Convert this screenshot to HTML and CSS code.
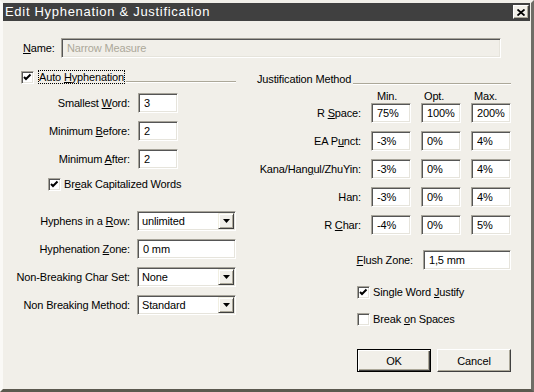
FILE: index.html
```html
<!DOCTYPE html>
<html lang="en">
<head>
  <meta charset="UTF-8">
  <title>Edit Hyphenation &amp; Justification</title>
  <link rel="stylesheet" href="styles.css">
</head>
<body>
  <div class="window">
    <div class="titlebar">
      <span class="title">Edit Hyphenation &amp; Justification</span>
      <span class="close">
        <svg width="8" height="7" viewBox="0 0 8 7"><path d="M0.5 0.5 L7.5 6.5 M7.5 0.5 L0.5 6.5" stroke="#000" stroke-width="1.8"/></svg>
      </span>
    </div>

    <div class="content">
      <div class="name-row">
        <label class="name-label"><u>N</u>ame:</label>
        <input class="field name-field" value="Narrow Measure" disabled>
      </div>

      <div class="columns">
        <!-- hyphenation -->
        <div class="left">
          <div class="group-head">
            <span class="check on"><svg width="11" height="11" viewBox="0 0 11 11"><polyline points="2,5 4,7 8.5,2.5" fill="none" stroke="#000" stroke-width="2"/></svg></span>
            <span class="focus">Auto <u>H</u>yphenation</span>
            <span class="rule"></span>
          </div>

          <div class="row first"><label><span>Smallest <u>W</u>ord:</span></label><input class="field small" value="3"></div>
          <div class="row"><label><span>Minimum <u>B</u>efore:</span></label><input class="field small" value="2"></div>
          <div class="row"><label><span>Minimum <u>A</u>fter:</span></label><input class="field small" value="2"></div>

          <div class="check-row indent">
            <span class="check on"><svg width="11" height="11" viewBox="0 0 11 11"><polyline points="2,5 4,7 8.5,2.5" fill="none" stroke="#000" stroke-width="2"/></svg></span>
            <span class="check-text">Br<u>e</u>ak Capitalized Words</span>
          </div>

          <div class="row wide spaced"><label><span>Hyphens in a <u>R</u>ow:</span></label>
            <div class="select"><span class="sel-text">unlimited</span><span class="arrow"><svg width="7" height="4" viewBox="0 0 7 4"><path d="M0 0 H7 L3.5 4 Z" fill="#000"/></svg></span></div>
          </div>
          <div class="row wide"><label><span>Hyphenation <u>Z</u>one:</span></label><input class="field long" value="0 mm"></div>
          <div class="row wide"><label><span>Non-Breaking Char Set:</span></label>
            <div class="select"><span class="sel-text">None</span><span class="arrow"><svg width="7" height="4" viewBox="0 0 7 4"><path d="M0 0 H7 L3.5 4 Z" fill="#000"/></svg></span></div>
          </div>
          <div class="row wide"><label><span>Non Breaking Method:</span></label>
            <div class="select"><span class="sel-text">Standard</span><span class="arrow"><svg width="7" height="4" viewBox="0 0 7 4"><path d="M0 0 H7 L3.5 4 Z" fill="#000"/></svg></span></div>
          </div>
        </div>

        <!-- justification -->
        <div class="right">
          <div class="group-head jtitle">
            <span>Justification Method</span>
            <span class="rule"></span>
          </div>

          <div class="jhead">
            <span></span><span class="h-min">Min.</span><span>Opt.</span><span>Max.</span>
          </div>

          <div class="jgrid">
            <label><span>R <u>S</u>pace:</span></label><input class="field" value="75%"><input class="field" value="100%"><input class="field" value="200%">
            <label><span>EA P<u>u</u>nct:</span></label><input class="field" value="-3%"><input class="field" value="0%"><input class="field" value="4%">
            <label><span>Kana/Han<u>g</u>ul/ZhuYin:</span></label><input class="field" value="-3%"><input class="field" value="0%"><input class="field" value="4%">
            <label><span>Han:</span></label><input class="field" value="-3%"><input class="field" value="0%"><input class="field" value="4%">
            <label><span>R <u>C</u>har:</span></label><input class="field" value="-4%"><input class="field" value="0%"><input class="field" value="5%">
          </div>

          <div class="flush">
            <label><u>F</u>lush Zone:</label><input class="field flush-field" value="1,5 mm">
          </div>

          <div class="check-row opt first-opt">
            <span class="check on"><svg width="11" height="11" viewBox="0 0 11 11"><polyline points="2,5 4,7 8.5,2.5" fill="none" stroke="#000" stroke-width="2"/></svg></span>
            <span class="check-text">Single Word <u>J</u>ustify</span>
          </div>
          <div class="check-row opt">
            <span class="check"></span>
            <span class="check-text">Break <u>o</u>n Spaces</span>
          </div>

          <div class="buttons">
            <button class="btn default">OK</button>
            <button class="btn">Cancel</button>
          </div>
        </div>
      </div>
    </div>
  </div>
</body>
</html>
```

FILE: styles.css
```css
body { margin: 0; background: #fff; font-family: "Liberation Sans", Arial, sans-serif; font-size: 11px; letter-spacing: -0.15px; color: #000; }
u { text-decoration: underline; text-underline-offset: 1px; }

.window { width: 534px; height: 392px; box-sizing: border-box; background: #f1efe9; border: 3px solid #f1efe9; border-right-color: #6f6d66; border-bottom-color: #5b594f; border-left-color: #faf9f6; }

.titlebar { height: 18px; margin-right: 1px; background: #404040; color: #fff; display: flex; align-items: center; justify-content: space-between; padding-left: 2px; }
.title { font-size: 13px; letter-spacing: 0.7px; line-height: 18px; }
.close { width: 16px; height: 14px; box-sizing: border-box; margin-right: 1px; background: #f1efe9; border: 1px solid; border-color: #fff #404040 #404040 #fff; box-shadow: inset -1px -1px #aca899; display: flex; align-items: center; justify-content: center; }
.close svg { display: block; }

.content { padding: 17px 20px 0 18px; }

.name-row { display: flex; align-items: center; height: 20px; }
.name-label { width: 38px; margin-left: 2px; }

.field { box-sizing: border-box; height: 20px; margin: 0; padding: 0 0 0 5px; border: 1px solid; border-color: #a7a49a #fff #fff #a7a49a; box-shadow: inset 1px 1px #555, inset -1px -1px #e6e4dc; background: #fff; font: inherit; letter-spacing: inherit; color: #000; outline: none; }
.name-field { width: 440px; background: #f1efe9; color: #aca899; }
.small { width: 40px; }
.long { width: 99px; }
.flush-field { width: 88px; }

.columns { display: grid; grid-template-columns: 215px 254px; column-gap: 21px; margin-top: 12px; }

.group-head { display: flex; align-items: center; height: 14px; }
.rule { flex: 1; align-self: flex-end; height: 0; border-top: 1px solid #aca899; border-bottom: 1px solid #fff; margin-bottom: 1px; margin-left: 1px; }
.focus { height: 14px; line-height: 14px; padding: 0 1px; margin-left: 4px; outline: 1px dotted #000; outline-offset: -1px; }
.jtitle { margin-top: 2px; }
.jtitle .rule { margin-left: 2px; }

.check { width: 13px; height: 13px; box-sizing: border-box; flex: none; background: #fff; border: 1px solid; border-color: #a7a49a #fff #fff #a7a49a; box-shadow: inset 1px 1px #555, inset -1px -1px #e6e4dc; }
.check svg { display: block; }
.check-row { display: flex; align-items: center; height: 14px; margin-top: 8px; }
.check-text { margin-left: 3px; }
.indent { padding-left: 27px; }

.row { display: flex; align-items: center; height: 20px; margin-top: 8px; }
.row.first { margin-top: 9px; }
.row label { width: 109px; margin-right: 8px; flex: none; display: flex; justify-content: flex-end; white-space: nowrap; }
.row.wide label { margin-right: 7px; }
.row.spaced { margin-top: 20px; }

.select { width: 100px; height: 20px; box-sizing: border-box; display: flex; padding: 1px; border: 1px solid; border-color: #a7a49a #fff #fff #a7a49a; box-shadow: inset 1px 1px #555, inset -1px -1px #e6e4dc; background: #fff; }
.sel-text { flex: 1; padding-left: 3px; line-height: 16px; }
.arrow { width: 16px; height: 16px; box-sizing: border-box; background: #f1efe9; border: 1px solid; border-color: #f1efe2 #404040 #404040 #f1efe2; box-shadow: inset 1px 1px #fff, inset -1px -1px #aca899; display: flex; align-items: center; justify-content: center; }
.arrow svg { display: block; }

.jhead { display: grid; grid-template-columns: 1fr 40px 40px 40px; column-gap: 10px; margin-top: 4px; line-height: 13px; height: 13px; }
.jhead span { padding-left: 3px; }
.jhead .h-min { padding-left: 6px; }
.jgrid { display: grid; grid-template-columns: 1fr 40px 40px 40px; grid-auto-rows: 20px; column-gap: 10px; row-gap: 8px; }
.jgrid label { display: flex; align-items: center; justify-content: flex-end; white-space: nowrap; }
.jgrid .field { width: 40px; }

.flush { display: flex; justify-content: flex-end; align-items: center; height: 20px; margin-top: 15px; }
.flush label { margin-right: 10px; }

.opt { padding-left: 100px; margin-top: 13px; }
.opt.first-opt { margin-top: 15px; }

.buttons { display: flex; gap: 6px; padding-left: 100px; margin-top: 23px; }
.btn { width: 75px; height: 23px; box-sizing: border-box; margin: 0; padding: 0; font: inherit; letter-spacing: inherit; color: #000; background: #f1efe9; border: 1px solid; border-color: #fff #404040 #404040 #fff; box-shadow: inset -1px -1px #aca899; }
.btn.default { border-color: #000; box-shadow: inset 1px 1px #fff, inset -1px -1px #404040, inset -2px -2px #aca899; }
```
